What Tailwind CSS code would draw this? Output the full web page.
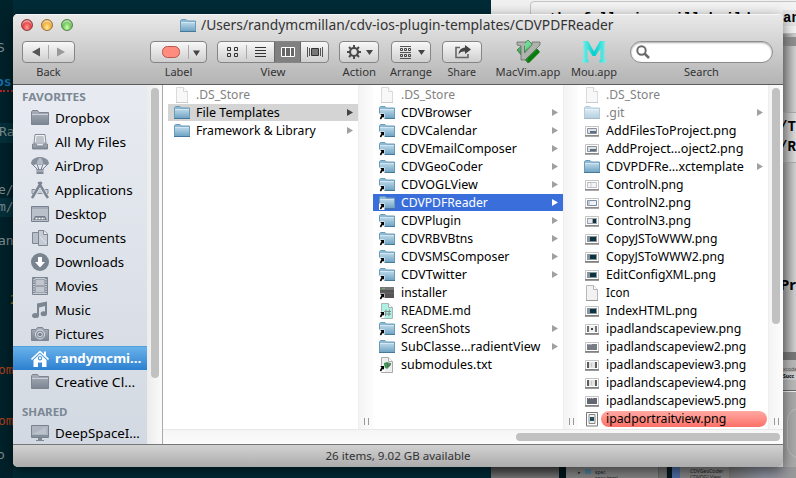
<!DOCTYPE html>
<html lang="en">
<head>
<meta charset="utf-8">
<title>Finder</title>
<script src="https://cdn.jsdelivr.net/npm/@tailwindcss/browser@4"></script>
</head>
<body class="relative w-[796px] h-[478px] overflow-hidden bg-[#002b36] font-['Noto_Sans','Open_Sans',sans-serif] text-black">
<svg width="0" height="0" class="absolute">
<defs>
<linearGradient id="blue" x1="0" y1="0" x2="0" y2="1"><stop offset="0" stop-color="#b5d4e6"/><stop offset="1" stop-color="#71a4c4"/></linearGradient>
<linearGradient id="gray" x1="0" y1="0" x2="0" y2="1"><stop offset="0" stop-color="#aab0ba"/><stop offset="1" stop-color="#7b8492"/></linearGradient>
<linearGradient id="mou" x1="0" y1="0" x2="1" y2="0"><stop offset="0" stop-color="#7ff0ea"/><stop offset=".5" stop-color="#00cfcb"/><stop offset="1" stop-color="#74eee8"/></linearGradient>
<linearGradient id="vim" x1="0" y1="0" x2="0" y2="1"><stop offset="0" stop-color="#7be0a0"/><stop offset="1" stop-color="#087a10"/></linearGradient>
<symbol id="folder" viewBox="0 0 16 16"><path d="M.5 13.5V2.5L1.5 1.5H6L7.5 3H15.5V13.5Z" fill="#8db9d4" stroke="#6d9cb9"/><path d="M1 5H15V13H1Z" fill="url(#blue)"/><path d="M0 13.5H16" stroke="#47789a"/><path d="M1 4.5H15" stroke="#d2e6f1"/></symbol>
<symbol id="arrow" viewBox="0 0 16 16"><path d="M0 8.5H5.5V15H0Z" fill="#fff"/><path d="M1.200 9H5V12.800L3.900 11.700L2 14.500L.8 13.600L2.400 10.300Z" fill="#000"/></symbol>
<symbol id="alias" viewBox="0 0 16 16"><use href="#folder"/><use href="#arrow"/></symbol>
<symbol id="doc" viewBox="0 0 16 16"><path d="M2.5 .5H9.5L13.5 4.5V15.5H2.5Z" fill="#f2f2f2" stroke="#b9b9b9"/><path d="M9.5 .5V4.5H13.5" fill="#fff" stroke="#b0b0b0"/><path d="M2 15.5H14" stroke="#999"/></symbol>
<symbol id="exec" viewBox="0 0 16 16"><path d="M1 2H15V13H1Z" fill="#555"/><path d="M1 2H15V5H1Z" fill="#777"/><path d="M3 3.5H6" stroke="#6ab36a"/><path d="M1 8H15" stroke="#666"/><use href="#arrow"/></symbol>
<symbol id="md" viewBox="0 0 16 16"><path d="M2.5 .5H9.5L13.5 4.5V15.5H2.5Z" fill="#aef0e4" stroke="#a5b8b4"/><path d="M9.5 .5V4.5H13.5" fill="#fff" stroke="#aaa"/><path d="M7 6.5L6.4 13M10.4 6.5L9.8 13M5 8.5H12M5 11H12" stroke="#808c8b" fill="none"/><use href="#arrow"/></symbol>
<symbol id="txt" viewBox="0 0 16 16"><path d="M2.5 .5H9.5L13.5 4.5V15.5H2.5Z" fill="#efefef" stroke="#aaa"/><path d="M9.5 .5V4.5H13.5" fill="#fff" stroke="#aaa"/><path d="M5 6L8 5L11 6L12 8L8 12L5 10Z" fill="#3f9b57"/><path d="M8 6L9 10L12 6" stroke="#666" fill="none"/><use href="#arrow"/></symbol>
<symbol id="img" viewBox="0 0 16 16"><path d="M1.5 3.5H14.5V12.5H1.5Z" fill="#fff" stroke="#c4c4c4"/><path d="M1 13H15" stroke="#555" stroke-width="1.2"/></symbol>
<symbol id="i1" viewBox="0 0 16 16"><use href="#img"/><path d="M3.5 5.5H12.5V10.5H3.5Z" fill="#dde1e8" stroke="#8b919b"/><path d="M6 8H12V10H6Z" fill="#5e6c80"/></symbol>
<symbol id="i2" viewBox="0 0 16 16"><use href="#img"/><path d="M3.5 5.5H12.5V10.5H3.5Z" fill="#f4f4f7" stroke="#c2c2ca"/><path d="M4 5.5H7V10" stroke="#a9a9b1" fill="none" stroke-dasharray="1"/></symbol>
<symbol id="i3" viewBox="0 0 16 16"><use href="#img"/><path d="M3.5 5.5H12.5V10.5H3.5Z" fill="#eef1f6" stroke="#7f8ba0"/><path d="M5 5V11" stroke="#9aa5b5"/></symbol>
<symbol id="i4" viewBox="0 0 16 16"><use href="#img"/><path d="M3 5H13V11H3Z" fill="#9aa2ac"/><path d="M4 6H8V10H4Z" fill="#e5e8ec"/><path d="M9 6H12V10H9Z" fill="#13303c"/></symbol>
<symbol id="i5" viewBox="0 0 16 16"><use href="#img"/><path d="M3 5H13V11H3Z" fill="#89959d"/><path d="M6 6H12V10H6Z" fill="#0c3340"/></symbol>
<symbol id="i6" viewBox="0 0 16 16"><use href="#img"/><path d="M3 5H13V11H3Z" fill="#73737b"/><path d="M5 5H11V11H5Z" fill="#eee"/><path d="M7 7H9V9H7Z" fill="#444"/></symbol>
<symbol id="i7" viewBox="0 0 16 16"><use href="#img"/><path d="M3 5H13V11H3Z" fill="#777b84"/><path d="M3.5 5.5H8" stroke="#a7acb3"/></symbol>
<symbol id="i8" viewBox="0 0 16 16"><use href="#img"/><path d="M3 5H13V11H3Z" fill="#5b5b63"/><path d="M5 5H11V11H5Z" fill="#e4e4e0"/><path d="M7.5 6V10" stroke="#c9c9c0"/></symbol>
<symbol id="i9" viewBox="0 0 16 16"><use href="#img"/><path d="M3 5H13V11H3Z" fill="#626772"/><path d="M4 5.5H9" stroke="#aab" stroke-dasharray="1"/></symbol>
<symbol id="i10" viewBox="0 0 16 16"><path d="M2.500 1.500H13.500V15H2.500Z" fill="#fff" stroke="#777"/><path d="M5 3.5H11V12.5H5Z" fill="#eee" stroke="#888"/><path d="M6 6H10V10H6Z" fill="#24505c"/></symbol>
<symbol id="s-folder" viewBox="0 0 18 18"><path d="M.5 15.5V3L1.5 1.5H6.5L8 3.5H17.5V15.5Z" fill="url(#gray)" stroke="#7d8591"/><path d="M1 5.5H17" stroke="#cdd2da"/></symbol>
<symbol id="s-files" viewBox="0 0 18 18"><path d="M4 1.5H14L15 10H3Z" fill="#f0f2f5" stroke="#858d99"/><path d="M5.5 4H12.5M5 6H13M5 8H13" stroke="#8e96a2"/><path d="M1.5 11H5L6 13H12L13 11H16.5V16H1.5Z" fill="url(#gray)" stroke="#7c8592"/></symbol>
<symbol id="s-air" viewBox="0 0 18 18"><path d="M0 7C0 2 5 0 9 0S18 2 18 7L15 8L12 7L9 8L6 7L3 8Z" fill="#858e9b"/><path d="M6 7Q6 2 9 .5Q12 2 12 7" fill="#b4bac4"/><path d="M1 7L7 13M6 7L8 13M12 7L10 13M17 7L11 13" stroke="#78818f" fill="none"/><path d="M5.5 12H12.5V17H5.5Z" fill="#7f8895"/><path d="M5.5 14H12.5" stroke="#c8cdd5"/></symbol>
<symbol id="s-app" viewBox="0 0 18 18"><path d="M1 8.500H17V12.500H1Z" fill="#c6cbd3" stroke="#848d9a"/><path d="M10 2L2 16.5M8 2L16 16.5" stroke="#e1e5ec" stroke-width="4"/><path d="M10.5 1L2.5 14.5L1 17M7.5 1L15 14L17 17" stroke="#7b8492" stroke-width="2.5" fill="none"/></symbol>
<symbol id="s-desk" viewBox="0 0 18 18"><path d="M.5 1.5H17.5V16.5H.5Z" fill="#bac0ca" stroke="#78818f"/><path d="M1 3H17" stroke="#8e96a2"/><path d="M2 15L4 11H14L16 15Z" fill="#747d8a"/><path d="M4.5 13.5H14" stroke="#fff" stroke-width="1.5" stroke-dasharray="2 1"/></symbol>
<symbol id="s-docs" viewBox="0 0 18 18"><path d="M1.5 3.5H7L10 6.5V14.5H1.5Z" fill="#b9bfc9" stroke="#7e8793"/><path d="M7.5 1.5H13L16.5 5V16.5H7.5Z" fill="#c7ccd4" stroke="#7e8793"/><path d="M12.5 1.5V5.5H16.5" fill="#eef0f3" stroke="#7e8793"/><path d="M9 8L15 14" stroke="#e0e3e8"/></symbol>
<symbol id="s-down" viewBox="0 0 18 18"><circle cx="9" cy="9" r="9" fill="#79828f"/><path d="M7 4H11V9H14L9 14.5L4 9H7Z" fill="#fff"/></symbol>
<symbol id="s-mov" viewBox="0 0 18 18"><path d="M1.5 .5H16.5V17.5H1.5Z" fill="#c8cdd5" stroke="#7c8592"/><path d="M3 1V17M15 1V17" stroke="#6f7886" stroke-width="1.500" stroke-dasharray="1.3 1"/><path d="M4.5 2.5H13.5V8.5H4.5ZM4.5 9.5H13.5V15.5H4.5Z" fill="#c2c7cf" stroke="#9da4af"/></symbol>
<symbol id="s-mus" viewBox="0 0 18 18"><path d="M6 2.5L16 .5V13H14V5L8 6.5V15H6Z" fill="#7c8592"/><ellipse cx="4.5" cy="14.5" rx="3.5" ry="2.6" fill="#7c8592"/><ellipse cx="12.8" cy="12.8" rx="3.2" ry="2.5" fill="#7c8592"/></symbol>
<symbol id="s-pic" viewBox="0 0 18 18"><path d="M.5 4.5H5L6.5 2.5H11.5L13 4.5H17.5V15.5H.5Z" fill="url(#gray)" stroke="#7e8793"/><circle cx="9" cy="9.5" r="4.5" fill="#858e9b" stroke="#e3e6eb"/><circle cx="9" cy="9.5" r="2.3" fill="#79828f" stroke="#dfe3e8"/></symbol>
<symbol id="s-home" viewBox="0 0 18 18"><path d="M9 1.5L.5 9.5M9 1.5L17.5 9.5" stroke="#fff" stroke-width="1.600"/><path d="M13 1.500H15V6H13Z" fill="#fff"/><path fill-rule="evenodd" d="M9 4L15.500 10V17H11V12.500H7V17H2.500V10ZM9 6A2.200 2.200 0 1 0 9 10.400A2.200 2.200 0 1 0 9 6Z" fill="#fff"/><circle cx="9" cy="8.200" r="1.100" fill="#fff"/></symbol>
<symbol id="s-mac" viewBox="0 0 18 18"><path d="M.5 1.5H17.5V13.5H.5Z" fill="#aeb5c0" stroke="#79828f"/><path d="M1 11H17V13H1Z" fill="#858e9b"/><path d="M2 10L15 3V10Z" fill="#bcc2cb"/><path d="M7 14H11V16H13V17H5V16H7Z" fill="#7f8895"/></symbol>
</defs>
</svg>

<!-- windows behind the Finder -->
<div class="absolute inset-0 bg-[#002b36] font-['DejaVu_Sans_Mono',monospace] text-[13px] leading-4 text-[#7e8c8e]">
  <div class="absolute left-0 top-0 w-[13px] h-full overflow-hidden bg-[#00222b] whitespace-pre">
    <div class="absolute -left-[3px] top-10">S :</div>
    <div class="absolute -left-[4px] top-[74px] font-bold text-[#1673b0]">os-</div>
    <div class="absolute left-0 top-[90px] w-full border-t-2 border-dotted border-[#b3262b]"></div>
    <div class="absolute left-0 top-[123px] w-full h-[20px] bg-[#04303b]"></div>
    <div class="absolute -left-px top-[124px]">Ran</div>
    <div class="absolute -left-[2px] top-[182px]">e/T</div>
    <div class="absolute left-0 top-[198px] w-full h-[19px] bg-[#04303b]"></div>
    <div class="absolute -left-[2px] top-[199px]">m/L</div>
    <div class="absolute -left-[2px] top-[233px]">and</div>
    <div class="absolute -left-[6px] top-[292px] text-[#a3262b]">)<span class="text-[#8f7a10]"> 2</span></div>
    <div class="absolute -left-[2px] top-[362px] text-[#b34118]">om/</div>
    <div class="absolute -left-[2px] top-[413px] text-[#b34118]">om/</div>
    <div class="absolute -left-[3px] top-[447px]">o y</div>
  </div>
</div>
<div class="absolute left-[491px] top-0 right-0 bottom-0 bg-[#f0f0f0] overflow-hidden">
  <div class="absolute left-[39px] top-[1px] w-[300px] h-[33px] rounded-sm border border-[#c4c4c4] bg-[#f2f2f2]"></div>
  <div class="absolute left-[58px] top-[11px] whitespace-pre font-['Liberation_Mono',monospace] font-bold text-[14px] leading-4">the following will build</div>
  <div class="absolute left-[292px] top-[34px] w-[13px] h-[344px] bg-linear-to-r from-[#9c9c9c] to-[#d2d2d2]"></div>
  <div class="absolute left-[292px] top-[10px] font-['Liberation_Mono',monospace] font-bold text-[14px] leading-4 bg-[#e4e4e4]">an</div>
  <div class="absolute left-[292px] top-[37px] w-[13px] h-[9px] bg-[#8e8e8e]"></div>
  <div class="absolute left-[292px] top-[112px] w-[13px] h-[51px] border-y border-[#aaa] bg-linear-to-r from-[#adadad] to-[#dedede] font-['Liberation_Mono',monospace] font-bold text-[14px] leading-[20px] pt-1">
    <div class="-ml-1">/T</div><div class="-ml-1">/R</div>
  </div>
  <div class="absolute left-[289px] top-[274px] font-bold text-[15px] leading-5">Pro</div>
  <div class="absolute left-[292px] top-[352px] w-[13px] h-[39px] bg-[#b9b9b9] border-b border-[#666]">
    <div class="h-2 bg-[#777]"></div>
    <div class="mt-1.5 text-[5px] leading-[6px] text-[#555]">xcode</div>
    <div class="text-[5px] leading-[8px] font-bold bg-[#ccc]">Succ</div>
  </div>
  <div class="absolute left-[292px] top-[392px] w-[13px] h-[86px] bg-[#a9a9a9]"></div>
  <div class="absolute left-[296px] top-[408px] w-[24px] h-[50px] rounded-full border border-[#bcc0c6]"></div>
  <div class="absolute left-0 bottom-0 h-[11px] w-[305px] flex overflow-hidden text-[5px] leading-[6px] text-[#222]">
    <div class="w-[68px] bg-linear-to-b from-[#4e4e4e] to-[#777]"></div>
    <div class="w-[7px] bg-[#00161c]"></div>
    <div class="w-[92px] bg-[#858585] pl-3 flex gap-1 pt-0.5"><span>▸</span><span class="w-[6px] h-[5px] bg-[#50809d]"></span><span>spec<br>spec.html</span></div>
    <div class="w-[9px] bg-[#737373] border-x border-[#666]"></div>
    <div class="w-[5px] bg-[#06191f]"></div>
    <div class="w-[8px] bg-[#4c6ea3]"></div>
    <div class="w-[49px] bg-[#858585] pl-[10px] pt-px">CDVGeoCoder<br>CDVOGLView</div>
    <div class="flex-1 bg-linear-to-r from-[#777] via-[#8d92a0] to-[#999]"></div>
  </div>
</div>

<!-- Finder window -->
<main class="absolute left-[13px] top-[14px] w-[770px] h-[453px] flex flex-col overflow-hidden rounded-[5px] bg-white shadow-[0_4px_14px_rgba(0,0,0,0.55)]">
  <header class="h-[71px] shrink-0 bg-linear-to-b from-[#e9e9e9] to-[#b4b4b4] border-b border-[#5c5c5c] shadow-[inset_0_1px_0_#f6f6f6]">
    <div class="relative flex h-[24px] items-center justify-center">
      <div class="absolute left-2 top-[5px] flex gap-2">
        <span class="size-3 rounded-full border border-[#8f3b38] bg-radial-[at_50%_75%] from-[#ff9f98] via-[#e8464a] to-[#a82225] shadow-[inset_0_2px_1px_rgba(255,255,255,0.5)]"></span>
        <span class="size-3 rounded-full border border-[#9b7130] bg-radial-[at_50%_75%] from-[#ffec9c] via-[#f2b13f] to-[#bb7616] shadow-[inset_0_2px_1px_rgba(255,255,255,0.5)]"></span>
        <span class="size-3 rounded-full border border-[#4f8540] bg-radial-[at_50%_75%] from-[#ccffae] via-[#76c862] to-[#3c8a2f] shadow-[inset_0_2px_1px_rgba(255,255,255,0.5)]"></span>
      </div>
      <svg class="absolute left-[167px] top-[4px] size-4"><use href="#folder"/></svg>
      <span class="absolute left-[188px] top-px origin-left whitespace-nowrap text-[13.5px] leading-5 text-[#333]" data-w="413">/Users/randymcmillan/cdv-ios-plugin-templates/CDVPDFReader</span>
    </div>
    <div class="flex pl-[9px] pt-[3px] text-[11px] leading-[14px] text-[#333]">
      <div class="w-[53px]">
        <div class="flex h-[22px] items-center rounded-[4px] border border-[#858585] bg-linear-to-b from-[#f8f8f8] to-[#cfcfcf]">
          <svg width="51" height="20" viewBox="0 0 51 20"><path d="M17 5.5V14.5L9 10Z" fill="#555"/><path d="M25.5 3V17" stroke="#aaa"/><path d="M34 5.5V14.5L42 10Z" fill="#999"/></svg>
        </div>
        <div class="mt-[2px] flex justify-center whitespace-nowrap"><span data-w="24">Back</span></div>
      </div>
      <div class="ml-[75px] w-[57px]">
        <div class="flex h-[22px] items-center rounded-[4px] border border-[#858585] bg-linear-to-b from-[#f8f8f8] to-[#cfcfcf]">
          <svg width="55" height="20" viewBox="0 0 55 20"><rect x="11.5" y="4.5" width="17" height="11" rx="5" fill="#ff8c7e" stroke="#b9574e"/><path d="M37.500 3V17" stroke="#aaa"/><path d="M42 8.500H49L45.500 14Z" fill="#444"/></svg>
        </div>
        <div class="mt-[2px] flex justify-center whitespace-nowrap"><span data-w="28">Label</span></div>
      </div>
      <div class="ml-[10px] w-[112px]">
        <div class="flex h-[22px] items-center rounded-[4px] border border-[#858585] bg-linear-to-b from-[#f8f8f8] to-[#cfcfcf]">
          <svg width="110" height="20" viewBox="0 0 110 20" fill="none" stroke="#333"><path d="M56 0H83V20H56Z" fill="#808080" stroke="none"/><path d="M56.500 0V20M82.500 0V20" stroke="#666"/><path d="M9.500 5.500H12.500V8.500H9.500ZM16.500 5.500H19.500V8.500H16.500ZM9.500 11.500H12.500V14.500H9.500ZM16.500 11.500H19.500V14.500H16.500Z"/><path d="M28.500 3V17" stroke="#aaa"/><path d="M37 5.500H48M37 8.500H48M37 11.500H48M37 14.500H48" /><path d="M63.500 5.500H76.500V14.500H63.500ZM67.500 5V15M72.500 5V15" stroke="#fff" fill="#666"/><path d="M89.500 5V15M91.500 6V14M102.500 6V14M104.500 5V15" stroke="#555"/><path d="M93.500 6.500H100.500V13.500H93.500Z" fill="#777"/></svg>
        </div>
        <div class="mt-[2px] flex justify-center whitespace-nowrap"><span data-w="25">View</span></div>
      </div>
      <div class="ml-[10px] w-[40px]">
        <div class="flex h-[22px] items-center rounded-[4px] border border-[#858585] bg-linear-to-b from-[#f8f8f8] to-[#cfcfcf]">
          <svg width="38" height="20" viewBox="0 0 38 20"><circle cx="14" cy="10" r="4" fill="none" stroke="#4a4a4a" stroke-width="2.200"/><path d="M14 3V6M14 14V17M7 10H10M18 10H21M9 5L11 7M17 13L19 15M19 5L17 7M11 13L9 15" stroke="#4a4a4a" stroke-width="2"/><path d="M26 8H33L29.500 13Z" fill="#444"/></svg>
        </div>
        <div class="mt-[2px] flex justify-center whitespace-nowrap"><span data-w="34">Action</span></div>
      </div>
      <div class="ml-[12px] w-[40px]">
        <div class="flex h-[22px] items-center rounded-[4px] border border-[#858585] bg-linear-to-b from-[#f8f8f8] to-[#cfcfcf]">
          <svg width="38" height="20" viewBox="0 0 38 20" fill="none" stroke="#444"><path d="M8 4.500H19M8 10.500H19M8 16.500H19" stroke="#555"/><path d="M8.500 6.500H10.500V8.500H8.500ZM12.500 6.500H14.500V8.500H12.500ZM16.500 6.500H18.500V8.500H16.500ZM8.500 12.500H10.500V14.500H8.500ZM12.500 12.500H14.500V14.500H12.500ZM16.500 12.500H18.500V14.500H16.500Z"/><path d="M26 8H33L29.500 13Z" fill="#444" stroke="none"/></svg>
        </div>
        <div class="mt-[2px] flex justify-center whitespace-nowrap"><span data-w="42">Arrange</span></div>
      </div>
      <div class="ml-[11px] w-[40px]">
        <div class="flex h-[22px] items-center rounded-[4px] border border-[#858585] bg-linear-to-b from-[#f8f8f8] to-[#cfcfcf]">
          <svg width="38" height="20" viewBox="0 0 38 20"><path d="M17 5.500H13V15.500H25V12" fill="none" stroke="#666" stroke-width="1.600"/><path d="M22 3L28 7.500L22 12V9.500C19 9 17 10 15.500 12.500C16 8 18 6 22 5.500Z" fill="#444"/></svg>
        </div>
        <div class="mt-[2px] flex justify-center whitespace-nowrap"><span data-w="29">Share</span></div>
      </div>
      <div class="ml-[13px] flex w-[66px] flex-col items-center">
        <svg class="h-[24px] w-[26px] -mt-px" viewBox="0 0 26 24"><path d="M2 10L13 0L24 11L13 23Z" fill="url(#vim)" stroke="#2c6a35" stroke-width=".7"/><path d="M2 2H11V5L9.500 6V13L17 5V2H25V5L10 20H6V6L2 5Z" fill="#aeb3ad" stroke="#5d665d" stroke-width=".7"/><path d="M10 4L13 .5L16 4L10 10Z" fill="#6fd993"/><path d="M13 18L22 9L25 12L14 23Z" fill="#087c0c"/></svg>
        <div class="mt-px whitespace-nowrap"><span data-w="65">MacVim.app</span></div>
      </div>
      <div class="ml-[10px] flex w-[46px] flex-col items-center">
        <svg class="h-[22px] w-[24px]" viewBox="0 0 24 22"><path d="M0 21.500V19L1.500 18.500V2L.5 0H6L12 10.500L18 0H23.500L22.500 2V18.500L24 19V21.500H17.500V19L18.500 18.500V7.500L13.500 15H10.500L5.500 7.500V18.500L6.500 19V21.500Z" fill="url(#mou)"/></svg>
        <div class="mt-[2px] whitespace-nowrap"><span data-w="46">Mou.app</span></div>
      </div>
      <div class="ml-[13px] w-[143px]">
        <div class="h-[22px] rounded-full border border-[#8d8d8d] bg-white shadow-[inset_0_1px_2px_#aaa]">
          <svg width="24" height="20" viewBox="0 0 24 20" fill="none" stroke="#6a6a6a" stroke-width="2"><circle cx="10.500" cy="8.500" r="4.200"/><path d="M13.500 11.500L18 16" stroke-width="2.500"/></svg>
        </div>
        <div class="mt-[2px] flex justify-center whitespace-nowrap"><span data-w="35">Search</span></div>
      </div>
    </div>
  </header>

  <div class="flex h-[359px] shrink-0 overflow-hidden">
    <nav id="side" class="w-[134px] shrink-0 overflow-hidden bg-linear-to-b from-[#e8ebf1] to-[#d3d9e2]"></nav>
    <div class="w-[15px] shrink-0 bg-linear-to-r from-[#ececec] to-[#fafafa] pl-1 pt-[3px]"><div class="h-[290px] w-2 rounded-full bg-[#c1c1c1]"></div></div>
    <div class="flex flex-1 flex-col border-l border-[#aaa]">
      <div class="flex h-[344px] pl-[5px]">
        <section id="c1" class="w-[190px] pt-px"></section>
        <div class="flex w-[15px] items-end justify-center gap-[3px] border-l border-[#eee] bg-linear-to-r from-[#f4f4f4] to-[#fcfcfc] pb-1"><i class="h-[7px] w-px bg-[#999]"></i><i class="h-[7px] w-px bg-[#999]"></i></div>
        <section id="c2" class="w-[190px] pt-px"></section>
        <div class="flex w-[15px] items-end justify-center gap-[3px] border-l border-[#eee] bg-linear-to-r from-[#f4f4f4] to-[#fcfcfc] pb-1"><i class="h-[7px] w-px bg-[#999]"></i><i class="h-[7px] w-px bg-[#999]"></i></div>
        <section id="c3" class="w-[190px] overflow-hidden pt-px"></section>
        <div class="flex w-[15px] flex-col items-center justify-between border-l border-[#eee] bg-linear-to-r from-[#f4f4f4] to-[#fcfcfc] pb-1 pt-[3px]"><div class="h-[236px] w-2 rounded-full bg-[#c1c1c1]"></div><div class="flex gap-[3px]"><i class="h-[7px] w-px bg-[#999]"></i><i class="h-[7px] w-px bg-[#999]"></i></div></div>
      </div>
      <div class="h-[15px] border-t border-[#e8e8e8] bg-linear-to-b from-[#f5f5f5] to-[#fcfcfc] pl-[353px] pt-[3px]"><div class="h-2 w-[264px] rounded-full bg-[#c1c1c1]"></div></div>
    </div>
  </div>
  <footer class="flex flex-1 items-center justify-center border-t border-[#777] bg-linear-to-b from-[#d2d2d2] to-[#acacac] text-[11px] text-[#333]"><span class="whitespace-nowrap" data-w="145">26 items, 9.02 GB available</span></footer>
</main>

<script>
const icon = (id, cls) => `<svg class="${cls}"><use href="#${id}"/></svg>`;
const side = [
  ['Dropbox','s-folder',55],['All My Files','s-files',71],['AirDrop','s-air',49],['Applications','s-app',78],['Desktop','s-desk',52],
  ['Documents','s-docs',71],['Downloads','s-down',69],['Movies','s-mov',43],['Music','s-mus',36],['Pictures','s-pic',49],
  ['randymcmi…','s-home',87],['Creative Cl…','s-folder',80]];
const item = ([t, i, w]) => {
  const on = i === 's-home';
  return `<div class="flex h-6 items-center pl-[18px] text-[13px] whitespace-nowrap ${on ? 'bg-linear-to-b from-[#68b2ea] to-[#2b80d0] border-t border-[#4fa0dd] font-bold text-white' : ''}">${icon(i, 'size-[18px] shrink-0 mr-1.5')}<span class="origin-left ${on ? '' : 'pt-px'}" data-w="${w}">${t}</span></div>`;
};
const head = (t, w, c) => `<div class="flex items-center pl-[9px] text-[11px] font-bold text-[#7b8794] ${c}"><span class="origin-left" data-w="${w}">${t}</span></div>`;
document.getElementById('side').innerHTML = head('FAVORITES', 64, 'h-[21px] pt-1') + side.map(item).join('') + head('SHARED', 46, 'h-[27px] pt-[9px]') + item(['DeepSpaceI…', 's-mac', 85]);

// [name, icon, text width, has children, state]
const cols = {
  c1: [['.DS_Store','doc',54,0,'dim'],['File Templates','folder',84,1,'path'],['Framework & Library','folder',120,1]],
  c2: [['.DS_Store','doc',54,0,'dim'],['CDVBrowser','alias',71,1],['CDVCalendar','alias',76,1],['CDVEmailComposer','alias',116,1],['CDVGeoCoder','alias',82,1],['CDVOGLView','alias',77,1],['CDVPDFReader','alias',87,1,'sel'],['CDVPlugin','alias',60,1],['CDVRBVBtns','alias',72,1],['CDVSMSComposer','alias',108,1],['CDVTwitter','alias',66,1],['installer','exec',46,0],['README.md','md',70,0],['ScreenShots','alias',69,1],['SubClasse…radientView','folder',139,1],['submodules.txt','txt',91,0]],
  c3: [['.DS_Store','doc',54,0,'dim'],['.git','folder',19,1,'dim'],['AddFilesToProject.png','i1',130,0],['AddProject…oject2.png','i1',137,0],['CDVPDFRe…xctemplate','folder',138,1],['ControlN.png','i2',78,0],['ControlN2.png','i3',85,0],['ControlN3.png','i4',85,0],['CopyJSToWWW.png','i5',111,0],['CopyJSToWWW2.png','i5',119,0],['EditConfigXML.png','i5',110,0],['Icon','doc',24,0],['IndexHTML.png','i5',91,0],['ipadlandscapeview.png','i6',135,0],['ipadlandscapeview2.png','i7',140,0],['ipadlandscapeview3.png','i8',140,0],['ipadlandscapeview4.png','i8',140,0],['ipadlandscapeview5.png','i9',140,0],['ipadportraitview.png','i10',120,0,'label'],['','',0,0,'label']]
};
for (const id in cols) {
  document.getElementById(id).innerHTML = cols[id].map(([t, i, w, kids, st]) => {
    const bg = st === 'sel' ? 'bg-[#3a6fdb] text-white' : st === 'path' ? 'bg-[#d4d4d4]' : '';
    const tone = st === 'dim' ? 'text-[#828282]' : '';
    const tri = st === 'sel' ? 'fill-white' : st === 'path' ? 'fill-[#444]' : 'fill-[#a0a0a0]';
    const pill = st === 'label' ? 'flex-1 h-4 rounded-full bg-linear-to-b from-[#ffaaa3] to-[#fb6f68] -ml-[5px] pl-[5px] mr-px' : 'mb-px';
    return `<div class="mb-px flex h-[17px] items-center pl-[6px] text-[13px] leading-4 whitespace-nowrap ${bg} ${tone}">${icon(i || 'none', 'size-4 shrink-0 mr-1.5' + (st === 'dim' ? ' opacity-50' : ''))}<div class="${pill}"><span class="inline-block origin-left align-top ${st === 'label' ? '-mt-px' : ''}" data-w="${w}">${t}</span></div>${kids ? `<svg class="ml-auto mr-[5px] h-[7px] w-[6px] shrink-0 ${tri}" viewBox="0 0 6 7"><path d="M0 0L6 3.500L0 7Z"/></svg>` : ''}</div>`;
  }).join('');
}
// condense or extend every label to its own width, again whenever its natural size changes
const fit = el => {
  if (el.textContent && el.offsetWidth) el.style.transform = `scaleX(${(el.dataset.w / el.offsetWidth).toFixed(4)})`;
};
const watcher = new ResizeObserver(list => list.forEach(e => fit(e.target)));
document.querySelectorAll('[data-w]').forEach(el => {
  el.style.display = 'inline-block';
  fit(el);
  watcher.observe(el);
});
window.addEventListener('load', () => document.querySelectorAll('[data-w]').forEach(fit));
</script>
</body>
</html>
